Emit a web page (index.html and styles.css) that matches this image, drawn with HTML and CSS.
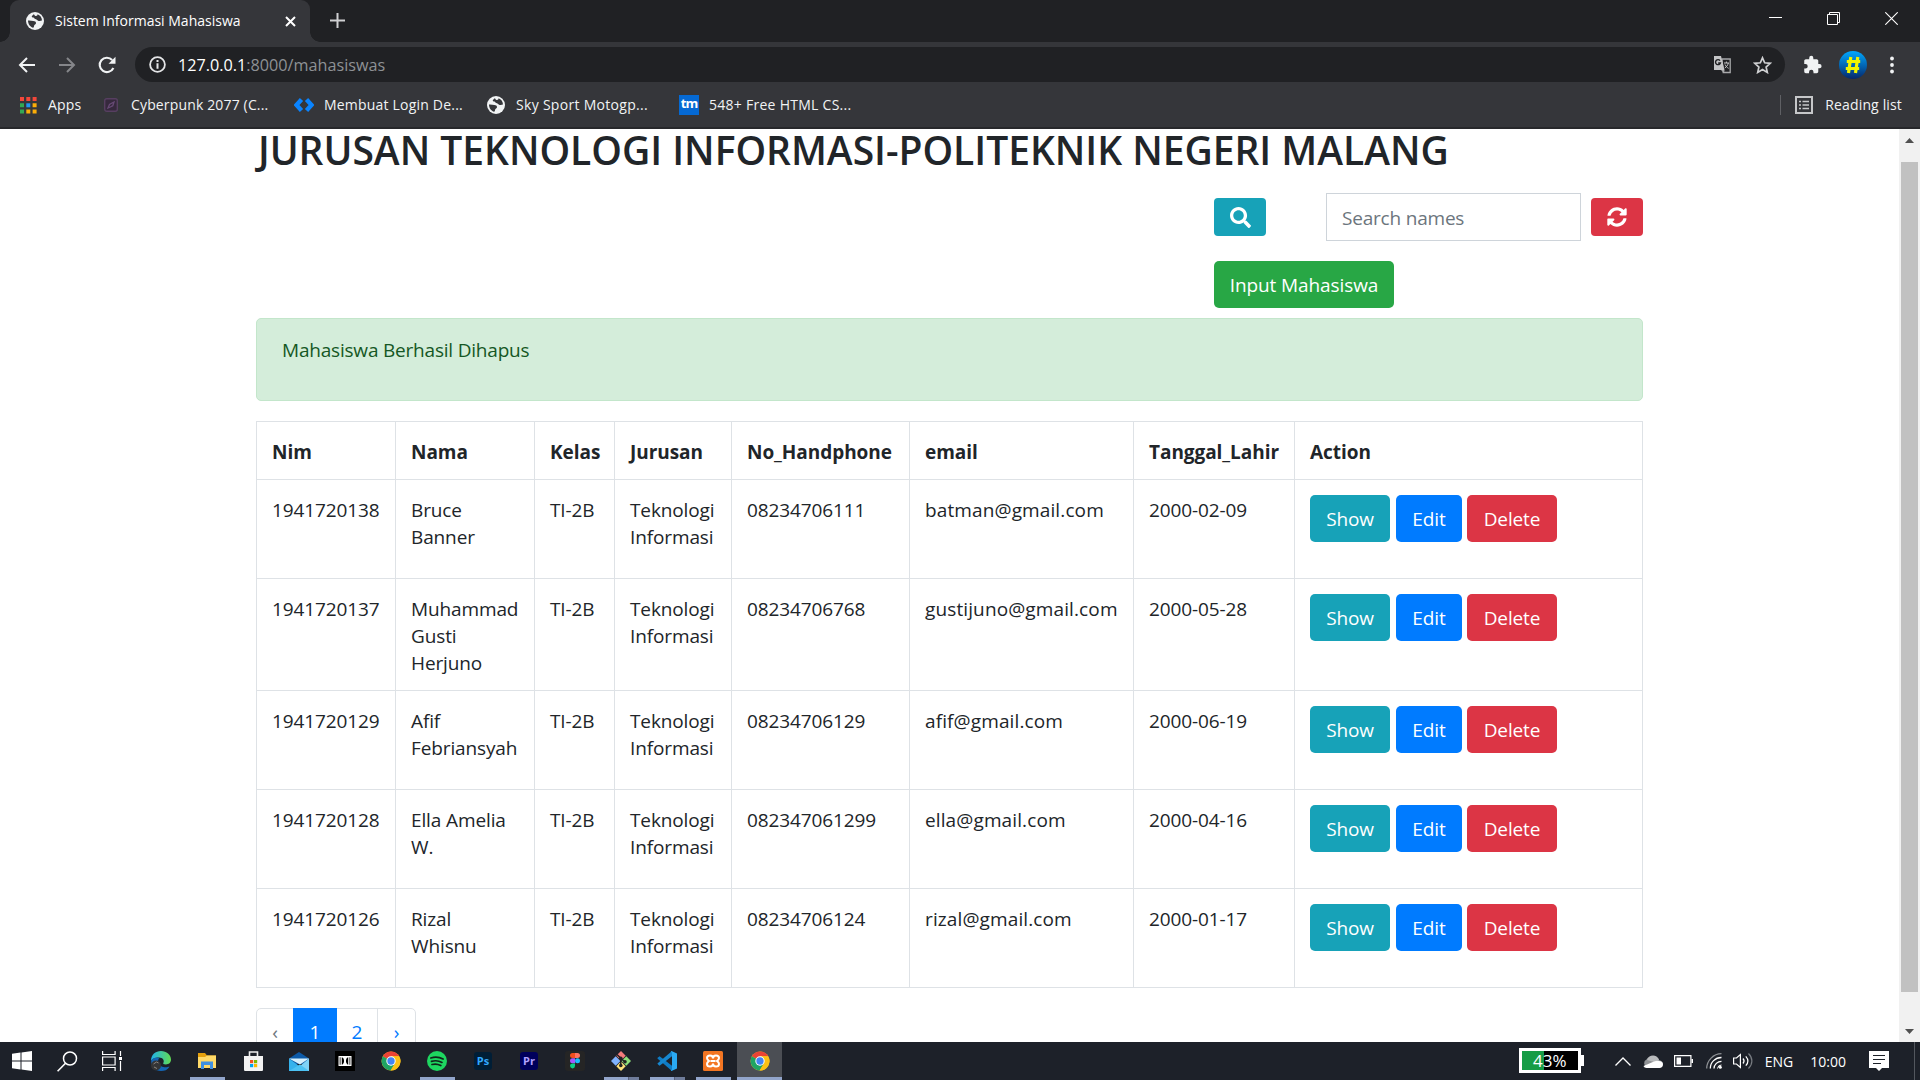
FILE: index.html
```
<!DOCTYPE html>
<html lang="id">
<head>
<meta charset="utf-8">
<title>Sistem Informasi Mahasiswa</title>
<link rel="stylesheet" href="styles.css">
</head>
<body>
<svg class="defs" width="0" height="0">
  <symbol id="globe" viewBox="0 0 18 18">
    <circle cx="9" cy="9" r="9" fill="#f1f3f4"/>
    <path d="M2 8.500c2-.2 3.800.3 5.300.5 1.500.2 2.900.6 2.700 2.200-.2 1.300-1.700 1-1.900 2.500-.1.900-.3 1.700-.9 2.100C4.200 15 2 12 2 8.500zM7.500 2.200c-.3 1-2 1.300-1.700 2.500.2 1 1.700.4 2.200 1.300.5 1 1.800 1.200 2.800 1.700 1 .5 1.500 1.500 3 1.400.9-.1 1.500-.9 2.200-.6 0-3-2-5.500-4.500-6.300.2 1.200-.8 1.900-1.900 1.700C8.600 3.700 8.600 2.500 7.500 2.200z" fill="#35363a"/>
  </symbol>
  <symbol id="chrome" viewBox="0 0 20 20">
    <circle cx="10" cy="10" r="9.500" fill="#fbc116"/>
    <path d="M10 10 1.770 5.250A9.500 9.500 0 0 1 18.230 5.250H10z" fill="#ea4335"/>
    <path d="M1.770 5.250A9.500 9.500 0 0 0 9.600 19.490L14 12.300 10 10z" fill="#1fa463"/>
    <path d="M10 5.250h8.230A9.500 9.500 0 0 1 9.600 19.490L14.200 12.200z" fill="#fbc116"/>
    <circle cx="10" cy="10" r="4.700" fill="#fff"/><circle cx="10" cy="10" r="3.700" fill="#4285f4"/>
  </symbol>
</svg>

<header class="tabstrip">
  <div class="tab">
    <svg width="18" height="18"><use href="#globe"/></svg>
    <span class="tab-title">Sistem Informasi Mahasiswa</span>
    <svg class="tab-close" width="11" height="11" viewBox="0 0 11 11"><path d="M1 1l9 9M10 1l-9 9" stroke="#fff" stroke-width="2"/></svg>
  </div>
  <svg class="new-tab" width="15" height="15" viewBox="0 0 15 15"><path d="M7.500 0v15M0 7.500h15" stroke="#cfd0d2" stroke-width="2"/></svg>
  <div class="window-controls">
    <svg width="13" height="13" viewBox="0 0 13 13"><path d="M0 5.500h13" stroke="#fff"/></svg>
    <svg width="13" height="13" viewBox="0 0 13 13"><path d="M.5 2.500h10v10H.5zM2.500 2.500v-2h10v10h-2" fill="none" stroke="#fff"/></svg>
    <svg width="13" height="13" viewBox="0 0 13 13"><path d="M.3.3l12.400 12.400M12.700.3L.3 12.700" stroke="#fff" stroke-width="1.100"/></svg>
  </div>
</header>

<nav class="toolbar">
  <svg class="nav-icon" width="18" height="18" viewBox="0 0 18 18"><path d="M9 2L2 9l7 7M2 9h15" fill="none" stroke="#f1f3f4" stroke-width="2"/></svg>
  <svg class="nav-icon" width="18" height="18" viewBox="0 0 18 18"><path d="M9 2l7 7-7 7M16 9H1" fill="none" stroke="#85868a" stroke-width="2"/></svg>
  <svg class="nav-icon" width="18" height="18" viewBox="0 0 18 18"><path d="M15.400 12A7.200 7.200 0 1 1 14.200 4" fill="none" stroke="#f1f3f4" stroke-width="2.100"/><path d="M17.500.8v7h-7z" fill="#f1f3f4"/></svg>
  <div class="omnibox">
    <svg width="17" height="17" viewBox="0 0 17 17"><circle cx="8.500" cy="8.500" r="7.400" fill="none" stroke="#e4e5e7" stroke-width="1.800"/><path d="M8.500 4v1.900M8.500 7.300v5.400" stroke="#e4e5e7" stroke-width="2"/></svg>
    <span class="url"><b>127.0.0.1</b>:8000/mahasiswas</span>
    <svg class="translate" width="19" height="19" viewBox="0 0 19 19"><path d="M9 4h8.200v13.500h-7z" fill="none" stroke="#a7a8aa" stroke-width="1.300"/><path d="M1 1h7l3.500 14H1z" fill="#c4c5c7"/><path d="M8 15l3 3 .6-3z" fill="#a7a8aa"/><path d="M7 5.600a2.500 2.500 0 1 0 .4 2.400H5.200" fill="none" stroke="#202124" stroke-width="1.400"/><path d="M11 8h5M13.400 6.500V8M15.300 8c-.5 2.500-2 4-3.500 5M12 9.500c.7 1.700 2 3 3.600 3.800" fill="none" stroke="#c4c5c7"/></svg>
    <svg class="star" width="19" height="18" viewBox="0 0 19 18"><path d="M9.500 1.800l2.200 5 5.500.5-4.100 3.700 1.200 5.400-4.800-2.900-4.800 2.900L5.900 11 1.800 7.300l5.500-.5z" fill="none" stroke="#cfd0d2" stroke-width="1.700"/></svg>
  </div>
  <svg class="puzzle" width="19" height="19" viewBox="1 0 22 23"><path d="M20.500 11H19V7c0-1.100-.9-2-2-2h-4V3.500a2.500 2.500 0 0 0-5 0V5H4c-1.100 0-2 .9-2 2v3.800h1.500a2.700 2.700 0 0 1 0 5.400H2V20c0 1.100.9 2 2 2h3.800v-1.500a2.700 2.700 0 0 1 5.400 0V22H17c1.100 0 2-.9 2-2v-4h1.500a2.500 2.500 0 0 0 0-5z" fill="#f1f3f4"/></svg>
  <div class="avatar"><svg width="16" height="18" viewBox="0 0 16 18"><path d="M5.800 1L3.500 17M12.800 1l-2.300 16M1.800 5.500h13.400M.8 12.500h13.400" stroke="#f2f500" stroke-width="3.200" fill="none"/></svg></div>
  <svg class="kebab" width="4" height="18" viewBox="0 0 4 18" fill="#f1f3f4"><circle cx="2" cy="2.500" r="1.900"/><circle cx="2" cy="9" r="1.900"/><circle cx="2" cy="15.500" r="1.900"/></svg>
</nav>

<nav class="bookmarks">
  <a class="bm bm-apps"><svg width="17" height="17" viewBox="0 0 17 17"><path d="M0 0h4v4H0zM6.300 0h4v4h-4zM12.600 0h4v4h-4z" fill="#f4473a"/><path d="M0 6.300h4v4H0zM0 12.600h4v4H0z" fill="#34a853"/><path d="M6.300 6.300h4v4h-4z" fill="#2196f3"/><path d="M12.600 6.300h4v4h-4zM6.300 12.600h4v4h-4zM12.600 12.600h4v4h-4z" fill="#fbad08"/></svg><span>Apps</span></a>
  <a class="bm bm-cyber"><svg width="14" height="14" viewBox="0 0 14 14"><rect x=".7" y=".7" width="12.600" height="12.600" rx="2" fill="#36293d" stroke="#573f61" stroke-width="1.400"/><path d="M4 10l1.500-3.500L8 5l2-1-1.200 3.700L6.300 9z" fill="none" stroke="#674a75" stroke-width="1.300"/></svg><span>Cyberpunk 2077 (C...</span></a>
  <a class="bm bm-login"><svg width="20" height="16" viewBox="0 0 20 16"><path d="M7.500 2.500L2.500 8l5 5.500M12.500 2.500l5 5.500-5 5.500" fill="none" stroke="#0a84ff" stroke-width="4.400"/></svg><span>Membuat Login De...</span></a>
  <a class="bm bm-sky"><svg width="18" height="18"><use href="#globe"/></svg><span>Sky Sport Motogp...</span></a>
  <a class="bm bm-html"><i class="tm">tm</i><span>548+ Free HTML CS...</span></a>
  <a class="bm reading"><svg width="18" height="18" viewBox="0 0 18 18"><rect x="1" y="1" width="16" height="16" fill="none" stroke="#c6c7c9" stroke-width="2"/><path d="M4 5.500h2M4 9h2M4 12.500h2M7.500 5.500H14M7.500 9H14M7.500 12.500H14" stroke="#c6c7c9" stroke-width="1.500"/></svg><span>Reading list</span></a>
</nav>

<div class="viewport">
  <main class="container">
    <h2>JURUSAN TEKNOLOGI INFORMASI-POLITEKNIK NEGERI MALANG</h2>
    <form class="search">
      <button type="button" class="btn-sm info"><svg width="21" height="21" viewBox="0 0 512 512" fill="#fff"><path d="M505 442.700L405.300 343c-4.500-4.500-10.600-7-17-7H372c27.600-35.300 44-79.700 44-128C416 93.100 322.900 0 208 0S0 93.100 0 208s93.100 208 208 208c48.300 0 92.700-16.400 128-44v16.300c0 6.400 2.500 12.500 7 17l99.700 99.700c9.400 9.400 24.600 9.400 33.900 0l28.300-28.300c9.400-9.400 9.400-24.600.1-34zM208 336c-70.700 0-128-57.200-128-128 0-70.700 57.200-128 128-128 70.700 0 128 57.200 128 128 0 70.700-57.200 128-128 128z"/></svg></button>
      <input class="field" type="text" placeholder="Search names">
      <button type="button" class="btn-sm danger"><svg width="20" height="20" viewBox="0 0 512 512" fill="#fff"><path d="M370.720 133.280C339.458 104.008 298.888 87.962 255.848 88c-77.458.068-144.328 53.178-162.791 126.850-1.344 5.363-6.122 9.150-11.651 9.150H24.103c-7.498 0-13.194-6.807-11.807-14.176C33.933 94.924 134.813 8 256 8c66.448 0 126.791 26.136 171.315 68.685L463.030 40.970C478.149 25.851 504 36.559 504 57.941V192c0 13.255-10.745 24-24 24H345.941c-21.382 0-32.090-25.851-16.971-40.971l41.750-41.749zM32 296h134.059c21.382 0 32.090 25.851 16.971 40.971l-41.750 41.750c31.262 29.273 71.835 45.319 114.876 45.280 77.418-.070 144.315-53.144 162.787-126.849 1.344-5.363 6.122-9.150 11.651-9.150h57.304c7.498 0 13.194 6.807 11.807 14.176C478.067 417.076 377.187 504 256 504c-66.448 0-126.791-26.136-171.315-68.685L48.970 471.030C33.851 486.149 8 475.441 8 454.059V320c0-13.255 10.745-24 24-24z"/></svg></button>
    </form>
    <div class="add"><a class="btn success">Input Mahasiswa</a></div>
    <div class="alert">Mahasiswa Berhasil Dihapus</div>
    <table>
      <colgroup><col class="c-nim"><col class="c-nama"><col class="c-kelas"><col class="c-jurusan"><col class="c-hp"><col class="c-email"><col class="c-lahir"><col></colgroup>
      <tr class="head"><th>Nim</th><th>Nama</th><th>Kelas</th><th>Jurusan</th><th>No_Handphone</th><th>email</th><th>Tanggal_Lahir</th><th>Action</th></tr>
      <tr><td>1941720138</td><td>Bruce Banner</td><td>TI-2B</td><td>Teknologi Informasi</td><td>08234706111</td><td class="wide">batman@gmail.com</td><td>2000-02-09</td><td><div class="actions"><a class="btn info show">Show</a><a class="btn primary edit">Edit</a><a class="btn danger delete">Delete</a></div></td></tr>
      <tr class="tall"><td>1941720137</td><td>Muhammad Gusti Herjuno</td><td>TI-2B</td><td>Teknologi Informasi</td><td>08234706768</td><td class="wide">gustijuno@gmail.com</td><td>2000-05-28</td><td><div class="actions"><a class="btn info show">Show</a><a class="btn primary edit">Edit</a><a class="btn danger delete">Delete</a></div></td></tr>
      <tr><td>1941720129</td><td>Afif Febriansyah</td><td>TI-2B</td><td>Teknologi Informasi</td><td>08234706129</td><td class="wide">afif@gmail.com</td><td>2000-06-19</td><td><div class="actions"><a class="btn info show">Show</a><a class="btn primary edit">Edit</a><a class="btn danger delete">Delete</a></div></td></tr>
      <tr><td>1941720128</td><td>Ella Amelia W.</td><td>TI-2B</td><td>Teknologi Informasi</td><td>082347061299</td><td class="wide">ella@gmail.com</td><td>2000-04-16</td><td><div class="actions"><a class="btn info show">Show</a><a class="btn primary edit">Edit</a><a class="btn danger delete">Delete</a></div></td></tr>
      <tr><td>1941720126</td><td>Rizal Whisnu</td><td>TI-2B</td><td>Teknologi Informasi</td><td>08234706124</td><td class="wide">rizal@gmail.com</td><td>2000-01-17</td><td><div class="actions"><a class="btn info show">Show</a><a class="btn primary edit">Edit</a><a class="btn danger delete">Delete</a></div></td></tr>
    </table>
    <div class="pagination"><span class="pg prev">‹</span><span class="pg current">1</span><span class="pg two">2</span><span class="pg next">›</span></div>
  </main>
  <aside class="scrollbar">
    <svg width="9" height="5" viewBox="0 0 9 5"><path d="M0 5L4.500 0 9 5z" fill="#505050"/></svg>
    <div class="thumb"></div>
    <svg width="9" height="5" viewBox="0 0 9 5"><path d="M0 0l4.500 5L9 0z" fill="#505050"/></svg>
  </aside>
</div>

<footer class="taskbar">
  <div class="system">
    <svg width="20" height="20" viewBox="0 0 20 20"><path d="M0 2.800L8.500 1.600V9.500H0zM9.500 1.400L20 0v9.500H9.500zM0 10.500h8.500v7.900L0 17.200zM9.500 10.500H20V20L9.500 18.600z" fill="#fff"/></svg>
    <svg width="21" height="21" viewBox="0 0 21 21"><circle cx="13" cy="7.500" r="6.500" fill="none" stroke="#fff" stroke-width="1.500"/><path d="M8.500 12.300L.6 20.300" stroke="#fff" stroke-width="1.600"/></svg>
    <svg width="21" height="20" viewBox="0 0 21 20"><path d="M.6 0v3.500h12.500V0M.6 20v-3.500h12.500V20M.6 6h12.500v8H.6zM18.500 0v5M18.500 10v10" fill="none" stroke="#fff" stroke-width="1.200"/><path d="M17 6h3v3h-3z" fill="#fff"/></svg>
  </div>
  <div class="apps">
    <div class="app"><svg width="20" height="20" viewBox="0 0 20 20"><defs><linearGradient id="eg" x1="0" x2="1"><stop offset="0" stop-color="#1fb2ec"/><stop offset="1" stop-color="#62db52"/></linearGradient></defs><path d="M0 10C0 3.500 4.500 0 10 0s10 3.800 10 8.500c0 3.200-2.400 4.900-5 4.900-2.800 0-3.200-.9-2.500-2 1-1.800-.5-5-4.500-5C4 6.400.8 8 0 10z" fill="url(#eg)"/><path d="M.2 9.500C2 6.500 6 5.800 8.500 7c-2.500 1.500-2 8.500 5 9.300 2.500.2 4.400-.8 5-.6C16.500 19 13.500 20 10 20 4 20 0 15.500.2 9.500z" fill="#1466b5"/><circle cx="5" cy="14.500" r="5" fill="#343536"/><path d="M2.500 13l3-2 2 1M3 16l3 1.500" stroke="#8b8580" fill="none"/></svg></div>
    <div class="app run"><svg width="18" height="16" viewBox="0 0 18 16"><path d="M0 0h7l2 2.500h9V15H0z" fill="#e5a00d"/><path d="M0 4h7l2-1.500h9V15H0z" fill="#ffd968"/><path d="M3 16V8.500h12V16h-3v-4H6v4z" fill="#3f8fe0"/></svg></div>
    <div class="app"><svg width="19" height="20" viewBox="0 0 19 20"><path d="M5.500 5V1h8v4" fill="none" stroke="#eee" stroke-width="1.600"/><path d="M0 5h19v13.500c0 1-.5 1.500-1.500 1.500h-16C.5 20 0 19.500 0 18.500z" fill="#f3f3f3"/><path d="M6 9h3.200v3.200H6z" fill="#f25022"/><path d="M10 9h3.200v3.200H10z" fill="#7fba00"/><path d="M6 13h3.200v3.200H6z" fill="#00a4ef"/><path d="M10 13h3.200v3.200H10z" fill="#ffb900"/></svg></div>
    <div class="app"><svg width="20" height="19" viewBox="0 0 20 19"><path d="M0 6.500L10 0l10 6.500V12H0z" fill="#0d5aa7"/><path d="M0 6.500h20L11 12.500z" fill="#d5effb"/><path d="M20 6.500V19H5z" fill="#7fd3f7"/><path d="M0 6.500L17 19H0z" fill="#35b2ec"/><path d="M0 19h20l-9-6.500z" fill="#4cc2f3"/></svg></div>
    <div class="app"><svg width="20" height="20" viewBox="0 0 20 20"><path d="M0 0h20v20H0z" fill="#000"/><path d="M3.500 5h13v10h-13z" fill="#fff"/><path d="M4.700 6.300h.8v7.400h-.8zM14.500 6.300h.8v7.400h-.8zM6.800 6.300c3 .5 3 6.900 0 7.400zM13.200 6.300c-3 .5-3 6.900 0 7.400z" fill="#000"/></svg></div>
    <div class="app"><svg width="20" height="20"><use href="#chrome"/></svg></div>
    <div class="app run"><svg width="20" height="20" viewBox="0 0 20 20"><circle cx="10" cy="10" r="10" fill="#1ed760"/><path d="M3.800 7c4-1.300 8.700-.9 12.300 1.100M4.500 10.400c3.500-1.100 7.300-.7 10.500 1M5 13.500c3-.8 6-.5 8.800 1" fill="none" stroke="#10241a" stroke-width="1.700" stroke-linecap="round"/></svg></div>
    <div class="app"><i class="adobe ps">Ps</i></div>
    <div class="app"><i class="adobe pr">Pr</i></div>
    <div class="app"><svg width="20" height="20" viewBox="0 0 20 20"><rect width="20" height="20" rx="3" fill="#252525"/><path d="M10 2H7.500a2.500 2.500 0 0 0 0 5H10z" fill="#f24e1e"/><path d="M10 2h2.500a2.500 2.500 0 0 1 0 5H10z" fill="#ff7262"/><path d="M10 7.200H7.500a2.500 2.500 0 0 0 0 5H10z" fill="#a259ff"/><circle cx="12.500" cy="9.700" r="2.500" fill="#1abcfe"/><path d="M10 12.400H7.500A2.500 2.500 0 1 0 10 15z" fill="#0acf83"/></svg></div>
    <div class="app run multi"><svg width="20" height="20" viewBox="0 0 20 20"><path d="M10 0l4.700 4.700L10 9.400 5.300 4.700z" fill="#f47c7c"/><path d="M4.700 5.300L9.400 10l-4.700 4.700L0 10z" fill="#80b3ff"/><path d="M15.300 5.300L20 10l-4.700 4.700L10.600 10z" fill="#8fe07a"/><path d="M10 10.600l4.700 4.700L10 20l-4.700-4.700z" fill="#ffe27a"/><path d="M6 3.500l3.800 3.800V15M10 7.500l4 3.500" fill="none" stroke="#222" stroke-width="1.500"/><circle cx="9.800" cy="7.300" r="1.800" fill="#222"/><circle cx="9.800" cy="14.500" r="1.800" fill="#222"/><circle cx="14" cy="10.700" r="1.800" fill="#222"/></svg></div>
    <div class="app run multi"><svg width="20" height="20" viewBox="0 0 20 20"><path d="M1.300 6.200l1.300-.9L15 14.700V20L.4 7.500z" fill="#0f7cc5"/><path d="M1.300 13.800l1.300.9L15 5.300V0L.4 12.500z" fill="#1687d0"/><path d="M14.500 0L20 2.500v15L14.500 20l-.8-1 1.300-.5v-17L13.700 1z" fill="#2aa9f2"/></svg></div>
    <div class="app run"><svg width="20" height="20" viewBox="0 0 20 20"><rect width="20" height="20" rx="1.500" fill="#f37623"/><path d="M10 7.500C10 5.500 8.500 4.500 7 4.500S4 5.500 4 7s1 2 2 3c-1 1-2 1.500-2 3s1.500 2.500 3 2.500 3-1 3-3c0 2 1.500 3 3 3s3-1 3-2.500-1-2-2-3c1-1 2-1.500 2-3s-1.500-2.500-3-2.500-3 1-3 3zM7.500 10h5" fill="none" stroke="#fff" stroke-width="2"/></svg></div>
    <div class="app run active"><svg width="20" height="20"><use href="#chrome"/></svg></div>
  </div>
  <div class="tray">
    <div class="battery"><span>43%</span></div>
    <svg class="t-chev" width="16" height="9" viewBox="0 0 16 9"><path d="M.5 8.500L8 1l7.500 7.500" fill="none" stroke="#fff" stroke-width="1.300"/></svg>
    <svg class="t-cloud" width="20" height="13" viewBox="0 0 20 13"><path d="M4 12a4 4 0 0 1-.5-7.500A7 7 0 0 1 16 5c3 .5 4 2.500 4 4z" fill="#8f9295"/><path d="M4 5C5 1 10-1 13.500 1.500 15 2.700 15.800 4 16 5l-5 2z" fill="#b8babc"/><path d="M3.500 13c-1.500 0-2.500-.8-3-2L11 6.500c2-.8 4-1 5-.5 2.300 0 4 1.500 4 3.500S18.500 13 16.500 13z" fill="#fff"/></svg>
    <svg class="t-bat" width="19" height="12" viewBox="0 0 19 12"><path d="M.6.6h16.300v10.800H.6z" fill="none" stroke="#fff" stroke-width="1.200"/><path d="M2.500 2.500h4.500v7H2.500zM17.500 4H19v4h-1.500z" fill="#fff"/></svg>
    <svg class="t-wifi" width="16" height="16" viewBox="0 0 16 16"><path d="M.7 15.500A15 15 0 0 1 15.500.7" fill="none" stroke="#8c8f93" stroke-width="1.300"/><path d="M4.300 15.500A11 11 0 0 1 15.500 4.500M8 15.500a7.500 7.500 0 0 1 7.500-7.200" fill="none" stroke="#fff" stroke-width="1.300"/><path d="M11.500 15.500a4 4 0 0 1 4-3.500" fill="none" stroke="#fff"/><circle cx="14.300" cy="14.300" r="1.500" fill="#fff"/></svg>
    <svg class="t-vol" width="20" height="18" viewBox="0 0 20 18"><path d="M.6 6h2.900L7.400 2.500v13L3.500 12H.6zM10 6.500c1.300 1.500 1.300 3.500 0 5M12.800 4.300c2.500 2.800 2.500 6.600 0 9.400" fill="none" stroke="#fff" stroke-width="1.200"/><path d="M15.500 1.500c4.500 4.500 4.500 10.500 0 15" fill="none" stroke="#777b80" stroke-width="1.200"/></svg>
    <span class="t-lang">ENG</span>
    <span class="t-time">10:00</span>
    <svg class="t-note" width="20" height="20" viewBox="0 0 20 20"><path d="M0 0h20v17h-7l-3 3-3-3H0z" fill="#fff"/><path d="M4 4.500h12M4 8.500h12M4 12.500h8" stroke="#1d2129" stroke-width="1.200"/></svg>
    <div class="show-desktop"></div>
  </div>
</footer>
</body>
</html>
```
FILE: styles.css
```
*{box-sizing:border-box}
body{margin:0;width:1920px;height:1080px;overflow:hidden;display:flex;flex-direction:column;background:#fff;font-family:"Open Sans","Noto Sans",sans-serif;color:#212529}
.defs{position:absolute}
svg{display:block;flex:none}
i{font-style:normal}

/* Browser tab strip */
.tabstrip{height:42px;flex:none;background:#202124;display:flex;align-items:flex-start}
.tab{position:relative;width:300px;height:42px;margin-left:10px;padding:0 14px 0 16px;background:#35363a;border-radius:9px 9px 0 0;display:flex;align-items:center;color:#fff;font-size:14px}
.tab::before,.tab::after{content:"";position:absolute;bottom:0;width:10px;height:10px}
.tab::before{left:-10px;background:radial-gradient(circle at 0 0,transparent 9.500px,#35363a 10px)}
.tab::after{right:-10px;background:radial-gradient(circle at 100% 0,transparent 9.500px,#35363a 10px)}
.tab-title{margin-left:11px;padding-bottom:2px;white-space:nowrap}
.tab-close{margin-left:auto}
.new-tab{margin:13px 0 0 20px}
.window-controls{margin:12px 22px 0 auto;display:flex;gap:45px}

/* Address bar */
.toolbar{height:45px;flex:none;background:#35363a;display:flex;align-items:center;padding:0 18px 0 18px}
.nav-icon{margin-right:22px}
.omnibox{width:1650px;height:35px;margin-left:-3px;border-radius:18px;background:#202124;display:flex;align-items:center;padding:0 13px 0 14px}
.url{margin-left:12px;font-size:16.200px;color:#8e9195}
.url b{font-weight:400;color:#fff}
.translate{margin-left:auto}
.star{margin-left:21px}
.puzzle{margin-left:18px}
.avatar{width:28px;height:28px;margin-left:17px;border-radius:50%;background:linear-gradient(#00a8ff,#06286b);display:flex;align-items:center;justify-content:center}
.kebab{margin-left:auto;margin-right:8px}

/* Bookmarks bar */
.bookmarks{height:42px;flex:none;background:#35363a;border-bottom:2px solid #27282b;display:flex;align-items:flex-start;padding:3px 18px 0 20px;color:#f1f3f4;font-size:14px}
.bm{display:flex;align-items:center;height:30px;white-space:nowrap}
.bm span{padding-bottom:2px}
.bm-apps{width:84px;gap:11px;letter-spacing:.200px}
.bm-cyber{width:190px;gap:13px;letter-spacing:.150px}
.bm-login{width:193px;gap:10px;letter-spacing:.200px}
.bm-sky{width:192px;gap:11px;letter-spacing:.300px}
.bm-html{gap:10px;letter-spacing:.270px}
.tm{width:20px;height:20px;background:#0569d3;color:#fff;font-weight:700;font-size:13px;line-height:17px;text-align:center;letter-spacing:-1px}
.reading{height:20px;margin:5px 0 0 auto;padding-left:14px;border-left:1px solid #5f6064;gap:12px;letter-spacing:.150px}

/* Page */
.viewport{height:913px;flex:none;display:flex;justify-content:space-between;overflow:hidden}
.container{width:1387px;margin-left:256px}
h2{margin:0;height:64px;padding-left:2px;font-size:39px;line-height:42px;font-weight:600;letter-spacing:-.020px;white-space:nowrap}
.search{display:flex;align-items:center;height:48px;margin-left:958px}
.btn-sm{width:52px;height:38px;border:0;border-radius:4px;padding:0;display:flex;align-items:center;justify-content:center}
.field{width:255px;height:48px;margin:0 10px 0 60px;border:1px solid #ced4da;border-radius:0;padding:1px 15px 0;font:19px "Open Sans",sans-serif;letter-spacing:-.200px}
.field::placeholder{color:#6c757d;opacity:1}
.add{margin:20px 0 10px 958px;display:flex}
.btn{height:47px;border-radius:5px;color:#fff;font-size:19px;line-height:48px;text-align:center}
.success{width:180px;background:#28a745;letter-spacing:-.100px}
.info{background:#17a2b8}
.primary{background:#007bff}
.danger{background:#dc3545}
.alert{height:83px;margin-bottom:20px;border:1px solid #c3e6cb;border-radius:5px;background:#d4edda;color:#155724;padding:18px 25px;font-size:19px;line-height:27px;letter-spacing:-.200px}
table{width:1387px;table-layout:fixed;border-collapse:collapse;font-size:19px;line-height:27px}
th,td{border:1px solid #dee2e6;padding:17px 14px 0 15px;vertical-align:top;text-align:left}
th{letter-spacing:-.050px}
td{letter-spacing:-.120px}
tr{height:99px}
.head{height:58px}
.tall{height:112px}
.c-nim,.c-nama{width:139px}
.c-kelas{width:80px}
.c-jurusan{width:117px}
.c-hp{width:178px}
.c-email{width:224px}
.c-lahir{width:161px}
.wide{letter-spacing:.120px}
.actions{display:flex;margin-top:-2px}
.show{width:80px;margin-right:6px}
.edit{width:66px;margin-right:5px}
.delete{width:90px}
.pagination{display:flex;margin-top:20px;width:160px;height:48px;border:1px solid #dee2e6;border-radius:5px;font-size:19px;line-height:47px;text-align:center;color:#007bff}
.prev{width:36px;color:#6c757d}
.current{width:44px;height:48px;margin-top:-1px;background:#007bff;color:#fff;line-height:49px}
.two{width:41px;border-right:1px solid #dee2e6}
.next{flex:1}

.scrollbar{width:21px;background:#f1f1f1;display:flex;flex-direction:column;align-items:center;padding:9px 0 8px}
.thumb{width:17px;height:830px;margin:19px 0 auto;background:#c1c1c1}

/* Windows taskbar */
.taskbar{height:38px;flex:none;background:#1d2129;display:flex;color:#fff}
.system{width:138px;display:flex;align-items:center;gap:24.500px;padding-left:12px}
.apps{display:flex}
.app{width:46px;height:38px;display:flex;flex-wrap:wrap;align-items:center;justify-content:center;position:relative}
.run::after{content:"";position:absolute;left:6px;bottom:0;width:35px;height:3px;background:#92a5cb}
.multi::after{background:linear-gradient(90deg,#92a5cb 24px,#586079 24px,#586079 25px,#6f7c9a 25px)}
.active{width:45px;margin-left:1px;background:#4b4e54}
.active::after{left:0;width:45px}
.adobe{width:18px;height:18px;border-radius:3px;font-size:11px;font-weight:700;line-height:17px;text-align:center}
.ps{background:#001e36;color:#31a8ff}
.pr{background:#00005b;color:#b0a0ff}
.tray{margin-left:auto;display:flex;align-items:center}
.battery{position:relative;width:62px;height:25px;margin-top:-1px;border:3px solid #fff;background:linear-gradient(90deg,#169c46 22px,#000 22px);font-size:17px;line-height:19px;text-align:center}
.battery::after{content:"";position:absolute;right:-6px;top:4px;width:3px;height:11px;background:#fff}
.t-chev{margin-left:34px}
.t-cloud{margin-left:12px}
.t-bat{margin-left:11px}
.t-wifi{margin-left:13px}
.t-vol{margin-left:11px}
.t-lang,.t-time{font-size:14px}
.t-lang{margin-left:12px}
.t-time{margin-left:17px}
.t-note{margin-left:23px}
.show-desktop{width:6px;height:38px;margin-left:25px;border-left:1px solid #53575e}
```
